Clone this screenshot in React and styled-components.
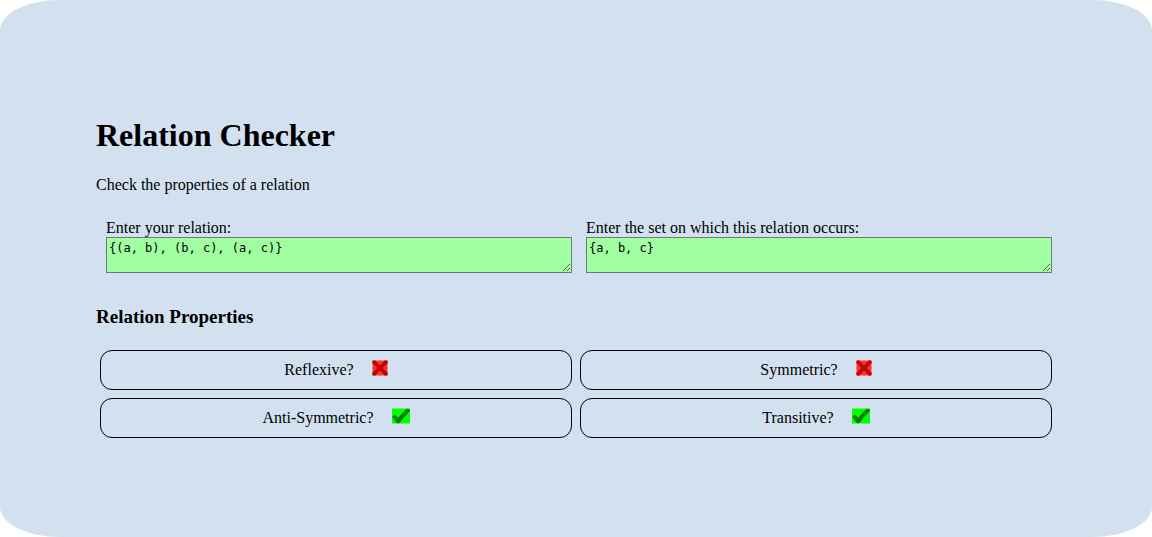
import React, { useState } from "react";
import styled, { createGlobalStyle } from "styled-components";

const GlobalStyle = createGlobalStyle`
  body {
    margin: 0;
    background: #ffffff;
    color: #000000;
    font-family: "Liberation Serif", "Times New Roman", serif;
    font-size: 16px;
    line-height: 18px;
  }
`;

const Page = styled.main`
  box-sizing: border-box;
  min-height: 100vh;
  padding: 49px 96px 32px;
  display: flex;
  flex-direction: column;
  justify-content: center;
  background: #d3e0ef;
  border-radius: 60px / 30px;
`;

const Title = styled.h1`
  margin: 0 0 22px;
  font-size: 32px;
  line-height: 37px;
`;

const Intro = styled.p`
  margin: 0 0 21px;
`;

const Subtitle = styled.h2`
  margin: 33px 0 22px;
  font-size: 19px;
  line-height: 22px;
`;

const Columns = styled.div`
  display: grid;
  grid-template-columns: 1fr 1fr;
  gap: 8px;
  padding: 0 4px;
`;

const Field = styled.div`
  display: flex;
  flex-direction: column;
  padding: 4px 0 0 6px;
`;

const Input = styled.textarea`
  box-sizing: border-box;
  width: 100%;
  height: 36px;
  margin: 0;
  padding: 3px 2px 2px;
  border: 1px solid #767676;
  background: #a0ffa0;
  color: #000000;
  font-family: "DejaVu Sans Mono", monospace;
  font-size: 12px;
  line-height: 15px;
  resize: both;
`;

const Property = styled.div`
  box-sizing: border-box;
  min-height: 40px;
  padding-top: 1px;
  display: flex;
  align-items: center;
  justify-content: center;
  gap: 18px;
  border: 1px solid #000000;
  border-radius: 12px;
`;

const Mark = styled.svg`
  display: block;
  flex: none;
  margin-bottom: 4px;
`;

function Cross() {
  return (
    <Mark width="16" height="16" viewBox="0 0 16 16" role="img" aria-label="No">
      <rect width="15" height="15" x="0.5" y="0.5" fill="#ff3030" />
      <path d="M0.8 0.8 L15.2 15.2 M15.2 0.8 L0.8 15.2" stroke="#701818" strokeWidth="0.8" />
      <path d="M2.4 2.4 L13.6 13.6 M13.6 2.4 L2.4 13.6" stroke="#901010" strokeWidth="3.6" strokeLinecap="square" />
      <path d="M2.4 2.4 L13.6 13.6 M13.6 2.4 L2.4 13.6" stroke="#cc0000" strokeWidth="2.4" strokeLinecap="square" />
    </Mark>
  );
}

function Check() {
  return (
    <Mark width="18" height="16" viewBox="0 0 18 16" role="img" aria-label="Yes">
      <rect width="18" height="15" y="0.5" fill="#00ff00" />
      <path
        d="M0.6 8.8 L3 7 L6.2 10.2 L14.4 1.2 L17.4 1.6 L17.4 3 L7 14.8 L5.2 14.8 Z"
        fill="#008000"
        stroke="#056005"
        strokeWidth="0.6"
      />
    </Mark>
  );
}

const properties = [
  { label: "Reflexive?", holds: false },
  { label: "Symmetric?", holds: false },
  { label: "Anti-Symmetric?", holds: true },
  { label: "Transitive?", holds: true },
];

export default function App() {
  const [relation, setRelation] = useState("{(a, b), (b, c), (a, c)}");
  const [baseSet, setBaseSet] = useState("{a, b, c}");

  return (
    <>
      <GlobalStyle />
      <Page>
        <Title>Relation Checker</Title>
        <Intro>Check the properties of a relation</Intro>
        <Columns>
          <Field>
            <label htmlFor="relation">Enter your relation:</label>
            <Input
              id="relation"
              spellCheck={false}
              value={relation}
              onChange={(e) => setRelation(e.target.value)}
            />
          </Field>
          <Field>
            <label htmlFor="base-set">Enter the set on which this relation occurs:</label>
            <Input
              id="base-set"
              spellCheck={false}
              value={baseSet}
              onChange={(e) => setBaseSet(e.target.value)}
            />
          </Field>
        </Columns>
        <Subtitle>Relation Properties</Subtitle>
        <Columns>
          {properties.map(({ label, holds }) => (
            <Property key={label}>
              <span>{label}</span>
              {holds ? <Check /> : <Cross />}
            </Property>
          ))}
        </Columns>
      </Page>
    </>
  );
}
